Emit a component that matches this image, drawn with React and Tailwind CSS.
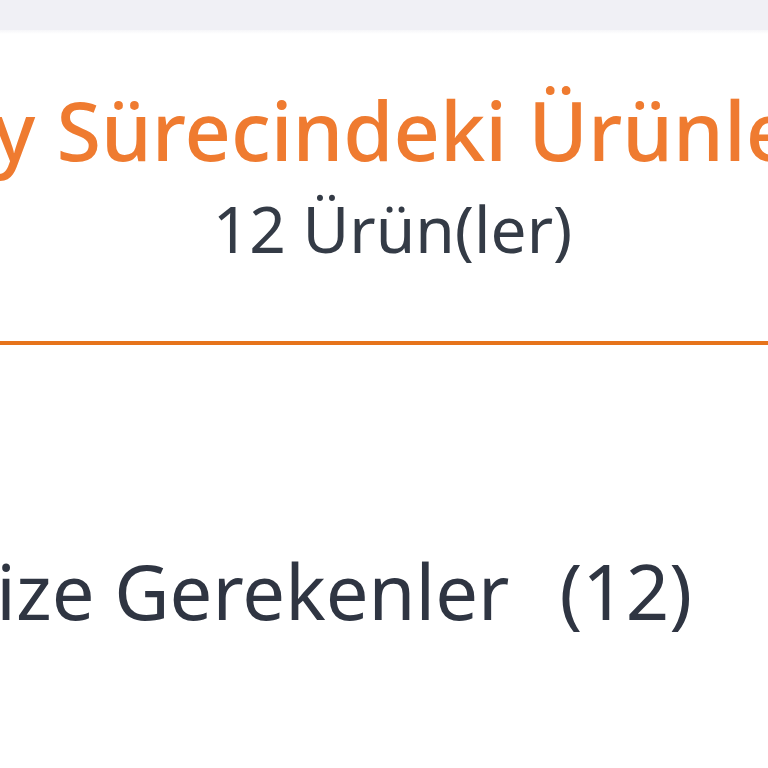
export default function App() {
  return (
    <div className="w-[768px] h-[768px] overflow-hidden bg-white flex flex-col" style={{ fontFamily: '"Noto Sans", "Open Sans", Arial, sans-serif' }}>
      <div className="h-[30px] bg-[#f0f0f5] shrink-0" />
      <div className="h-[4px] bg-gradient-to-b from-[#f6f6f9] to-white shrink-0" />
      <div className="flex flex-col pt-[56px]">
        <div className="flex">
          <h1 className="whitespace-nowrap text-[81px] leading-[80px] text-[#ef7b30] font-medium ml-[-168px]">Onay Sürecindeki Ürünler</h1>
        </div>
        <div className="flex justify-center pr-[17px]">
          <p className="whitespace-nowrap text-[64px] leading-[64px] text-[#343b46] mt-[27px] ml-[34px]">12 Ürün(ler)</p>
        </div>
      </div>
      <div className="h-[4px] bg-[#e6731b] mt-[80px] shrink-0" />
      <div className="flex justify-end pr-[76px] mt-[208px]">
        <div className="whitespace-nowrap text-[76px] leading-[76px] text-[#2f3542] flex">
          <span>Onaylamanize Gerekenler</span>
          <span className="ml-[50px]">(12)</span>
        </div>
      </div>
    </div>
  );
}
